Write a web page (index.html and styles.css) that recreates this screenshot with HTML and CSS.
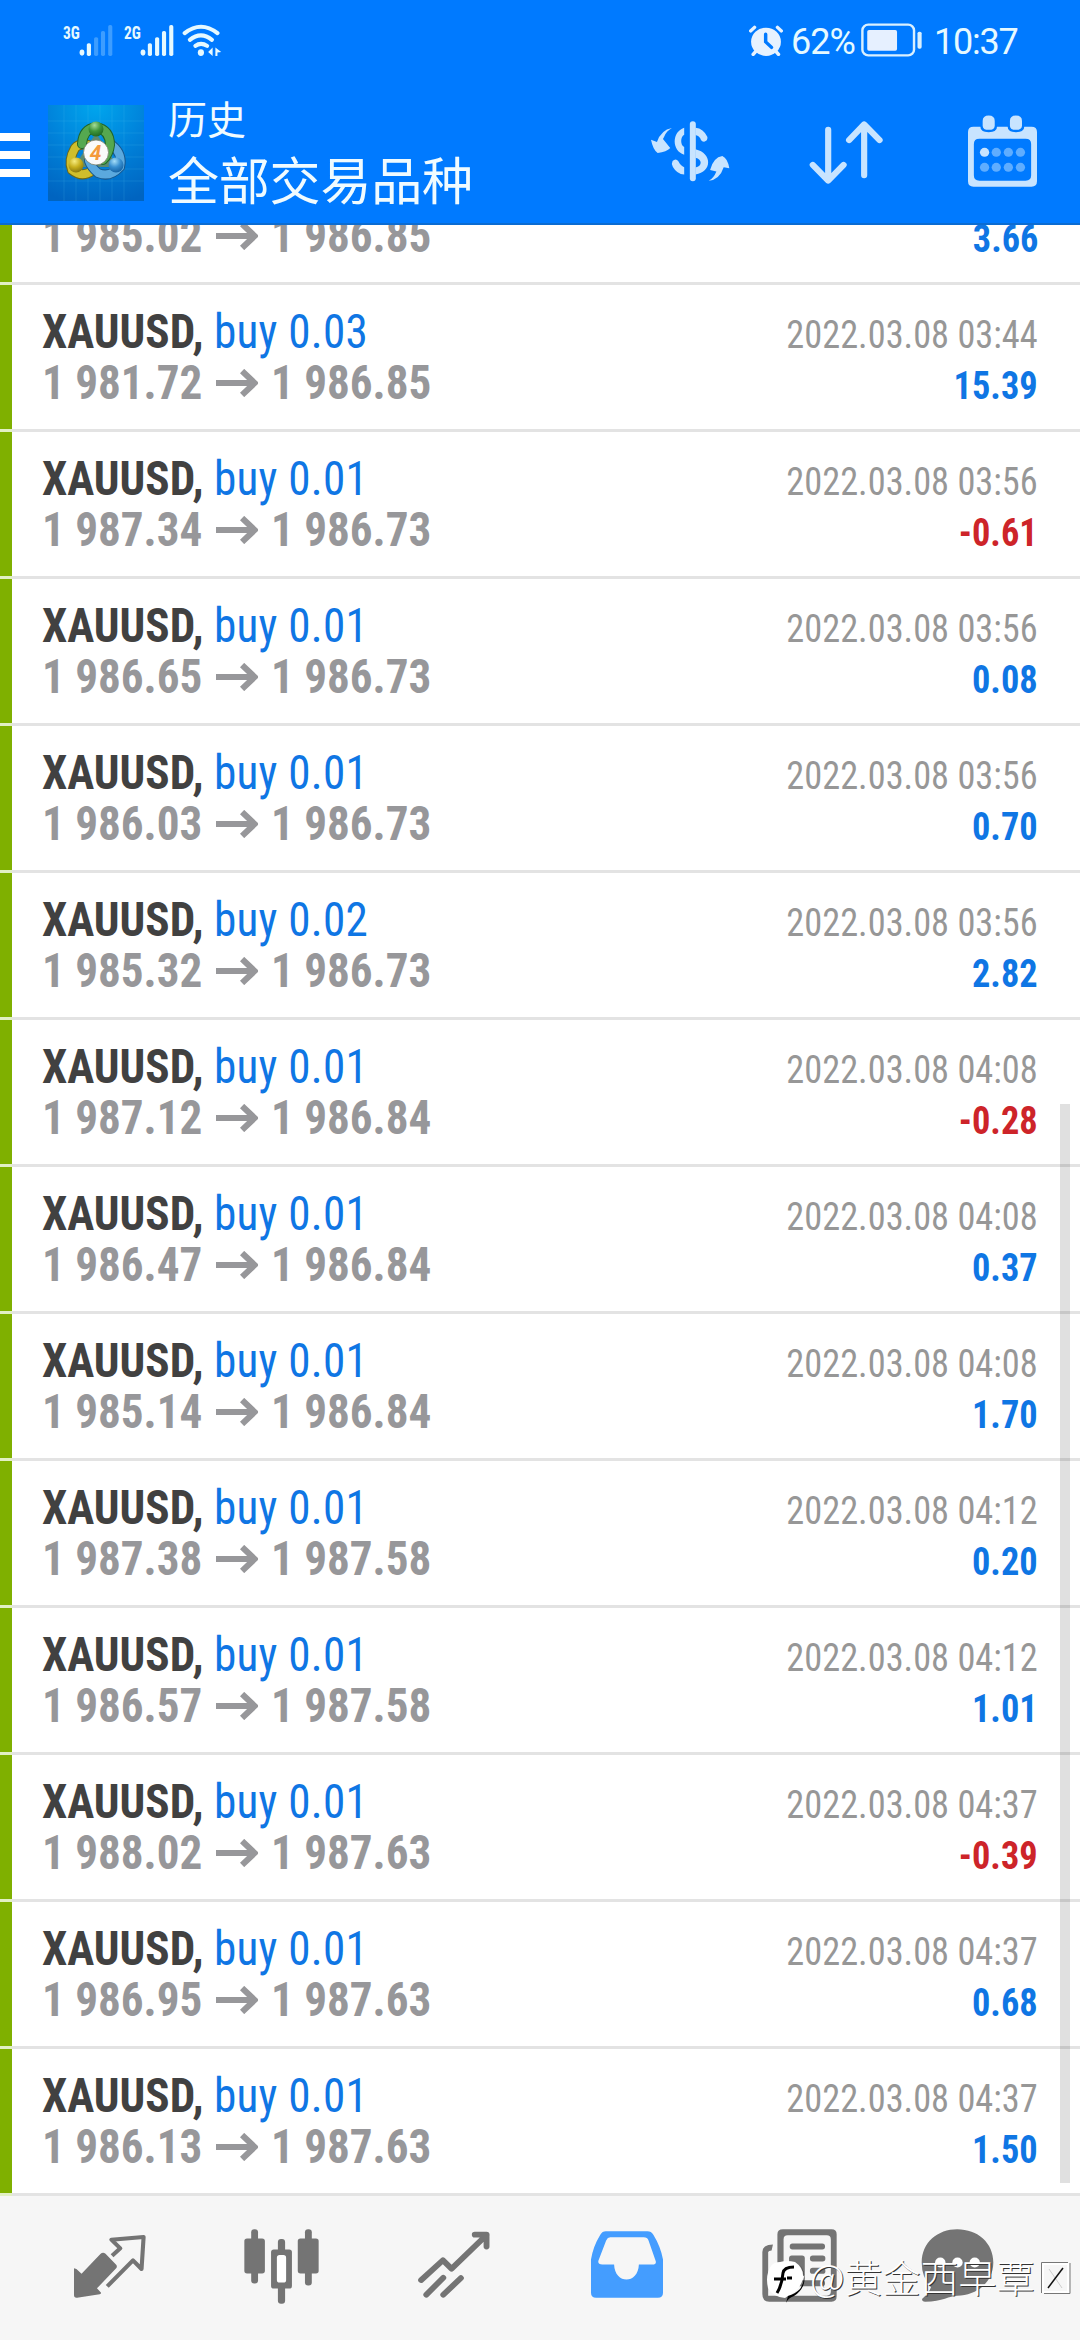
FILE: index.html
```html
<!DOCTYPE html>
<html lang="zh-CN">
<head>
<meta charset="utf-8">
<title>历史</title>
<link rel="stylesheet" href="styles.css">
</head>
<body>
<svg class="defs" width="0" height="0">
  <symbol id="arrow" viewBox="0 0 42 28" preserveAspectRatio="none"><path d="M0 14H38M26 2L38.500 14L26 26" fill="none" stroke="#97979a" stroke-width="6"/></symbol>
</svg>
<div class="screen">
<header class="header">
  <div class="status">
    <svg class="signals" viewBox="180 65 470 110" preserveAspectRatio="none" fill="#e6f9ff">
      <text x="183" y="115" font-size="56" font-weight="700" textLength="49" lengthAdjust="spacingAndGlyphs">3G</text>
      <ellipse cx="238" cy="156" rx="7" ry="9"/>
      <rect x="252" y="128" width="12" height="38" rx="5"/>
      <g fill="#3d9dff"><rect x="273" y="110" width="12" height="56" rx="5"/><rect x="293" y="92" width="12" height="74" rx="5"/><rect x="314" y="74" width="12" height="92" rx="5"/></g>
      <text x="360" y="115" font-size="56" font-weight="700" textLength="49" lengthAdjust="spacingAndGlyphs">2G</text>
      <ellipse cx="415" cy="156" rx="7" ry="9"/>
      <rect x="429" y="128" width="12" height="38" rx="5"/><rect x="450" y="110" width="12" height="56" rx="5"/><rect x="470" y="92" width="12" height="74" rx="5"/><rect x="491" y="74" width="12" height="92" rx="5"/>
      <g fill="none" stroke="#e6f9ff" stroke-width="12" stroke-linecap="round"><path d="M536 98Q583 60 631 98"/><path d="M551 118Q583 92 615 118"/><path d="M567 136Q583 124 601 136"/></g>
      <ellipse cx="583" cy="156" rx="9" ry="10"/>
      <path d="M604 154L617 141V166ZM625 141L642 154L631 156V166H625Z"/>
    </svg>
    <div class="status-right">
      <svg class="alarm" viewBox="608 70 98 100" preserveAspectRatio="none">
        <g fill="none" stroke="#e6f2ff" stroke-width="10" stroke-linecap="round"><path d="M613 91L624 80M701 91L690 80M620 162L630 150M693 162L683 150"/></g>
        <ellipse cx="657" cy="124" rx="43" ry="43" fill="#e6f2ff"/>
        <path d="M656 101V124L673 141" fill="none" stroke="#007aff" stroke-width="10" stroke-linecap="round"/>
      </svg>
      <span class="percent">62%</span>
      <svg class="battery" viewBox="932 70 176 102" preserveAspectRatio="none">
        <rect x="936" y="75" width="149" height="92" rx="17" fill="none" stroke="#d9f0ff" stroke-width="7"/>
        <rect x="950" y="91" width="86" height="62" rx="5" fill="#e6f0ff"/>
        <rect x="1095" y="96" width="12" height="51" rx="5" fill="#d9f0ff"/>
      </svg>
      <span class="clock">10:37</span>
    </div>
  </div>
  <div class="toolbar">
    <div class="menu"><span></span><span></span><span></span></div>
    <svg class="logo" viewBox="0 0 96 96">
      <defs>
        <radialGradient id="sky" cx=".5" cy="0" r="1.050"><stop offset="0" stop-color="#00a6ee"/><stop offset=".5" stop-color="#0082da"/><stop offset="1" stop-color="#0064c0"/></radialGradient>
        <radialGradient id="green" cx=".4" cy=".25" r=".8"><stop offset="0" stop-color="#a5dc98"/><stop offset=".5" stop-color="#3f963c"/><stop offset="1" stop-color="#1c6420"/></radialGradient>
        <radialGradient id="gold" cx=".4" cy=".25" r=".8"><stop offset="0" stop-color="#f6ec80"/><stop offset=".5" stop-color="#c8b01e"/><stop offset="1" stop-color="#81710c"/></radialGradient>
        <radialGradient id="blue" cx=".4" cy=".25" r=".8"><stop offset="0" stop-color="#a5def8"/><stop offset=".5" stop-color="#388fd0"/><stop offset="1" stop-color="#125d9e"/></radialGradient>
      </defs>
      <rect width="96" height="96" fill="url(#sky)"/>
      <path d="M16 0V96M28 0V96M40 0V96M52 0V96M64 0V96M76 0V96M0 16H96M0 28H96M0 40H96M0 52H96M0 64H96M0 76H96" stroke="#5cc5f2" stroke-opacity=".16"/>
      <path d="M48 28L70 62H26Z" fill="#5c8a70"/>
      <g fill="none" stroke-linecap="round">
        <path d="M44 66Q34 73 24 65Q20 55 27 43Q31 38 40 40" stroke="#6b6719" stroke-width="10"/>
        <path d="M44 66Q34 73 24 65Q20 55 27 43Q31 38 40 40" stroke="#cfbe2c" stroke-width="8"/>
        <path d="M64 40Q75 49 72 62Q62 73 50 68Q43 62 41 56" stroke="#17568c" stroke-width="10"/>
        <path d="M64 40Q75 49 72 62Q62 73 50 68Q43 62 41 56" stroke="#5ba9de" stroke-width="8"/>
        <path d="M34 39Q35 24 48 22Q62 25 62 40Q61 49 55 55" stroke="#1f642b" stroke-width="10"/>
        <path d="M34 39Q35 24 48 22Q62 25 62 40Q61 49 55 55" stroke="#55a850" stroke-width="8"/>
      </g>
      <circle cx="48" cy="24" r="7.500" fill="url(#green)"/><circle cx="28" cy="60" r="7.500" fill="url(#gold)"/><circle cx="68" cy="60" r="7.500" fill="url(#blue)"/>
      <circle cx="48" cy="47.500" r="12.500" fill="#fafafa" stroke="#79806c" stroke-width=".8"/>
      <text x="47.500" y="55" text-anchor="middle" font-size="21" font-weight="700" font-style="italic" fill="#f49a3c">4</text>
    </svg>
    <div class="titles"><div class="small">历史</div><div class="large">全部交易品种</div></div>
    <svg class="symbols" viewBox="32 45 238 186" fill="#c8e4ff">
      <path d="M95 69Q79 78 72 94L68 102L90 129Q79 141 52 144Q38 134 32 104L50 111Q62 75 95 69Z"/>
      <path d="M206 228Q221 220 229 200L210 195Q220 157 247 153Q263 160 268 190L251 187Q239 224 206 228Z"/>
      <path d="M132 68V89C120 94 120 121 132 126V149C94 138 94 80 132 68ZM132 209V187Q121 183 115 170Q107 158 97 168Q92 177 98 186Q110 207 132 209Z"/>
      <rect x="149" y="48" width="18" height="181" rx="9"/>
      <path d="M166 68Q190 70 202 96Q203 108 192 110Q183 110 180 99Q175 91 166 90ZM166 133C217 145 217 201 166 209V188C187 183 187 163 166 158Z"/>
    </svg>
    <svg class="sort" viewBox="780 360 216 194" preserveAspectRatio="none" fill="none" stroke="#c8e4ff" stroke-width="18" stroke-linecap="round" stroke-linejoin="round"><path d="M836 389V540M791 494L836 541L881 494M941 525V375M897 420L941 373L986 420"/></svg>
    <svg class="calendar" viewBox="1243 346 200 216" preserveAspectRatio="none" fill="#c8e4ff">
      <path fill-rule="evenodd" d="M1259 381H1427Q1443 381 1443 397V545Q1443 561 1427 561H1259Q1243 561 1243 545V397Q1243 381 1259 381ZM1276 417Q1260 417 1260 433V527Q1260 543 1276 543H1410Q1426 543 1426 527V433Q1426 417 1410 417Z"/>
      <g stroke="#007aff" stroke-width="7"><path d="M1282 364Q1282 344 1303 344Q1324 344 1324 364V378Q1324 394 1303 394Q1282 394 1282 378ZM1361 364Q1361 344 1382 344Q1403 344 1403 364V378Q1403 394 1382 394Q1361 394 1361 378Z"/></g>
      <circle cx="1291" cy="458" r="13.500"/>
      <g fill="#5fadff"><circle cx="1325" cy="458" r="13.500"/><circle cx="1360" cy="458" r="13.500"/><circle cx="1395" cy="458" r="13.500"/><circle cx="1291" cy="503" r="13.500"/><circle cx="1325" cy="503" r="13.500"/><circle cx="1360" cy="503" r="13.500"/><circle cx="1395" cy="503" r="13.500"/></g>
    </svg>
  </div>
</header>

<main class="deals">
  <div class="deal clipped"><div class="info"><div class="prices">1 985.02<svg><use href="#arrow"/></svg>1 986.85</div></div><div class="result"><div class="profit">3.66</div></div></div>
  <div class="deal"><div class="info"><div class="name"><b>XAUUSD,</b> <span>buy 0.03</span></div><div class="prices">1 981.72<svg><use href="#arrow"/></svg>1 986.85</div></div><div class="result"><div class="time">2022.03.08 03:44</div><div class="profit">15.39</div></div></div>
  <div class="deal"><div class="info"><div class="name"><b>XAUUSD,</b> <span>buy 0.01</span></div><div class="prices">1 987.34<svg><use href="#arrow"/></svg>1 986.73</div></div><div class="result"><div class="time">2022.03.08 03:56</div><div class="profit loss">-0.61</div></div></div>
  <div class="deal"><div class="info"><div class="name"><b>XAUUSD,</b> <span>buy 0.01</span></div><div class="prices">1 986.65<svg><use href="#arrow"/></svg>1 986.73</div></div><div class="result"><div class="time">2022.03.08 03:56</div><div class="profit">0.08</div></div></div>
  <div class="deal"><div class="info"><div class="name"><b>XAUUSD,</b> <span>buy 0.01</span></div><div class="prices">1 986.03<svg><use href="#arrow"/></svg>1 986.73</div></div><div class="result"><div class="time">2022.03.08 03:56</div><div class="profit">0.70</div></div></div>
  <div class="deal"><div class="info"><div class="name"><b>XAUUSD,</b> <span>buy 0.02</span></div><div class="prices">1 985.32<svg><use href="#arrow"/></svg>1 986.73</div></div><div class="result"><div class="time">2022.03.08 03:56</div><div class="profit">2.82</div></div></div>
  <div class="deal"><div class="info"><div class="name"><b>XAUUSD,</b> <span>buy 0.01</span></div><div class="prices">1 987.12<svg><use href="#arrow"/></svg>1 986.84</div></div><div class="result"><div class="time">2022.03.08 04:08</div><div class="profit loss">-0.28</div></div></div>
  <div class="deal"><div class="info"><div class="name"><b>XAUUSD,</b> <span>buy 0.01</span></div><div class="prices">1 986.47<svg><use href="#arrow"/></svg>1 986.84</div></div><div class="result"><div class="time">2022.03.08 04:08</div><div class="profit">0.37</div></div></div>
  <div class="deal"><div class="info"><div class="name"><b>XAUUSD,</b> <span>buy 0.01</span></div><div class="prices">1 985.14<svg><use href="#arrow"/></svg>1 986.84</div></div><div class="result"><div class="time">2022.03.08 04:08</div><div class="profit">1.70</div></div></div>
  <div class="deal"><div class="info"><div class="name"><b>XAUUSD,</b> <span>buy 0.01</span></div><div class="prices">1 987.38<svg><use href="#arrow"/></svg>1 987.58</div></div><div class="result"><div class="time">2022.03.08 04:12</div><div class="profit">0.20</div></div></div>
  <div class="deal"><div class="info"><div class="name"><b>XAUUSD,</b> <span>buy 0.01</span></div><div class="prices">1 986.57<svg><use href="#arrow"/></svg>1 987.58</div></div><div class="result"><div class="time">2022.03.08 04:12</div><div class="profit">1.01</div></div></div>
  <div class="deal"><div class="info"><div class="name"><b>XAUUSD,</b> <span>buy 0.01</span></div><div class="prices">1 988.02<svg><use href="#arrow"/></svg>1 987.63</div></div><div class="result"><div class="time">2022.03.08 04:37</div><div class="profit loss">-0.39</div></div></div>
  <div class="deal"><div class="info"><div class="name"><b>XAUUSD,</b> <span>buy 0.01</span></div><div class="prices">1 986.95<svg><use href="#arrow"/></svg>1 987.63</div></div><div class="result"><div class="time">2022.03.08 04:37</div><div class="profit">0.68</div></div></div>
  <div class="deal"><div class="info"><div class="name"><b>XAUUSD,</b> <span>buy 0.01</span></div><div class="prices">1 986.13<svg><use href="#arrow"/></svg>1 987.63</div></div><div class="result"><div class="time">2022.03.08 04:37</div><div class="profit">1.50</div></div></div>
  <div class="scrollbar"></div>
</main>

<nav class="tabs">
  <svg class="quotes" viewBox="215 193 210 192" preserveAspectRatio="none">
    <path fill="#747474" d="M215 296L222 298L237 312L292 253Q299 246 307 252L338 285Q342 290 338 296L282 356L294 369Q294 373 290 374L224 384Q215 385 215 376Z"/>
    <path fill="none" stroke="#747474" stroke-width="12" stroke-linejoin="round" d="M326 258L350 236L324 210L418 202L412 298L387 272L312 350"/>
  </svg>
  <svg class="charts" viewBox="708 176 219 224" preserveAspectRatio="none" fill="#747474">
    <rect x="729" y="177" width="20" height="162" rx="9"/><rect x="709" y="204" width="60" height="105" rx="8"/>
    <rect x="886" y="177" width="20" height="168" rx="9"/><rect x="865" y="204" width="61" height="105" rx="8"/>
    <rect x="807" y="206" width="21" height="193" rx="9"/><rect x="787" y="237" width="61" height="117" rx="8"/><rect x="804" y="254" width="27" height="82" rx="8" fill="#fff"/>
  </svg>
  <svg class="trade" viewBox="1213 184 208 202" preserveAspectRatio="none" fill="none" stroke="#747474" stroke-width="17" stroke-linecap="round" stroke-linejoin="round">
    <path d="M1222 332L1285 272L1310 298L1411 196M1377 195H1411V231M1237 376L1286 325M1286 376L1337 326"/>
  </svg>
  <svg class="history" viewBox="147 185 209 200" preserveAspectRatio="none">
    <path fill="#449dff" fill-rule="evenodd" d="M190 186H311Q322 186 328 196Q349 231 356 270V369Q356 384 341 384H162Q147 384 147 369V270Q153 231 174 196Q180 186 190 186ZM203 204Q195 204 191 213L169 272Q165 285 180 285H214C216 345 284 345 286 285H325Q339 285 334 272L314 213Q311 204 300 204Z"/>
  </svg>
  <svg class="news" viewBox="645 176 219 218" preserveAspectRatio="none">
    <path fill="#747474" d="M677 222Q646 222 646 245V370Q646 393 666 393H848Q863 393 863 377V192Q863 177 848 177H706Q690 177 690 192V375H663V245Q664 240 673 240Z"/>
    <rect x="708" y="195" width="138" height="180" rx="12" fill="#f6f6f6"/>
    <g fill="#747474"><rect x="726" y="219" width="103" height="18" rx="8"/><rect x="724" y="255" width="46" height="62" rx="8"/><rect x="785" y="255" width="45" height="18" rx="8"/><rect x="785" y="292" width="45" height="18" rx="8"/><rect x="726" y="329" width="103" height="18" rx="8"/></g>
  </svg>
  <svg class="chat" viewBox="1107 176 212 218" preserveAspectRatio="none">
    <path fill="#747474" d="M1109 276C1109 216 1156 177 1212 177C1272 177 1317 218 1317 276C1317 336 1268 375 1212 375C1190 375 1170 392 1119 393Q1110 393 1110 385Q1130 367 1136 350Q1109 320 1109 276Z"/>
    <g fill="#fff"><circle cx="1163" cy="276" r="15"/><circle cx="1213" cy="276" r="15"/><circle cx="1263" cy="276" r="15"/></g>
  </svg>
</nav>

<div class="watermark">
  <svg class="badge" viewBox="0 0 40 44"><path fill="#fff" d="M14 2Q21 0 29 2Q38 8 37 18Q35 29 25 34L19 38Q7 37 2 28Q-1 15 5 6Q8 2 14 2Z"/><path d="M11 33Q16 25 17 13Q18 7 28 7M8 19H20M21 18H26" fill="none" stroke="#000" stroke-width="3"/><path d="M34 5Q42 17 34 29Q29 34 22 36L20 43Q22 38 28 36Q36 31 38 23Q40 13 34 5Z"/></svg>
  <span>@黄金西早覃</span>
  <svg class="missing" viewBox="0 0 32 34"><path d="M3 3H28V31H3Z" fill="none" stroke="#fff" stroke-width="2"/><path d="M1.500 32V1.500H28M4 32.500H30V2" fill="none" stroke="#777"/><path d="M9 8L22 27" stroke="#ccc"/><path d="M23 7L8 27" stroke="#111" stroke-width="1.500"/></svg>
</div>
</div>
</body>
</html>
```
FILE: styles.css
```css
* { box-sizing: border-box; }
body { margin: 0; background: #fff; font-family: "Roboto Condensed", Roboto, "Noto Sans CJK SC", sans-serif; }
svg { display: block; flex: none; }
.defs { position: absolute; }
.screen { position: relative; display: flex; flex-direction: column; width: 1080px; height: 2340px; overflow: hidden; }

.header { flex: none; height: 225px; background: #007aff; border-bottom: 2px solid #0b6cd2; }
.status { display: flex; justify-content: space-between; height: 82px; padding: 22px 63px 0 62px; }
.signals { width: 162px; height: 37px; }
.status-right { display: flex; align-items: flex-start; height: 40px; color: #e6f9ff; font-family: Roboto, sans-serif; font-size: 36px; line-height: 40px; }
.alarm { width: 34px; height: 33px; margin-top: 2px; }
.percent { width: 65px; margin-left: 8px; letter-spacing: -1px; }
.battery { width: 61px; height: 34px; margin: 1px 12px 0 5px; }
.clock { width: 83px; letter-spacing: -1.200px; }

.toolbar { display: flex; align-items: flex-start; height: 141px; }
.menu { display: flex; flex-direction: column; gap: 10px; width: 30px; padding-top: 51px; }
.menu span { height: 8px; background: #fff; }
.logo { width: 96px; height: 96px; margin: 23px 0 0 18px; font-family: Roboto, sans-serif; }
.titles { width: 470px; margin: 7px 0 0 24px; color: #f0fbff; font-family: "Noto Sans CJK SC", sans-serif; }
.small { font-size: 39px; line-height: 56px; }
.large { font-size: 51px; line-height: 66px; letter-spacing: -.2px; }
.symbols { width: 79px; height: 62px; margin: 38px 0 0 13px; }
.sort { width: 74px; height: 65px; margin: 38px 0 0 79px; }
.calendar { width: 69px; height: 72px; margin: 33px 0 0 85px; }

.deals { position: relative; flex: none; height: 1971px; overflow: hidden; }
.deal {
  display: flex; justify-content: space-between; height: 147px; padding: 21px 42px 0;
  background:
    linear-gradient(#7fb000, #7fb000) 0 0 / 12px 144px no-repeat,
    linear-gradient(90deg, #e2f0c4 12px, #e3e3e3 12px) 0 144px / 100% 3px no-repeat;
}
.clipped { margin-top: -87px; padding-top: 72px; }
.info { transform: scaleX(.94); transform-origin: left top; }
.name, .prices { font-size: 48px; line-height: 51px; white-space: nowrap; }
.name b { color: #414141; }
.name span { color: #0f76e4; letter-spacing: .3px; }
.prices { display: flex; align-items: center; color: #97979a; font-weight: 700; }
.prices svg { width: 45px; height: 28px; margin: 0 14px; }
.result { padding-top: 4px; text-align: right; font-size: 39px; line-height: 51px; transform: scaleX(.932); transform-origin: right top; }
.time { color: #979797; }
.profit { color: #0f76e4; font-weight: 700; }
.loss { color: #cd2429; }
.scrollbar { position: absolute; top: 879px; right: 10px; width: 10px; height: 1079px; background: rgba(0, 0, 0, .12); }

.tabs { display: flex; flex: none; align-items: flex-start; height: 144px; padding-left: 74px; background: #f6f6f6; }
.quotes { width: 72px; height: 64px; margin-top: 38px; }
.charts { width: 75px; height: 75px; margin: 33px 0 0 98px; }
.trade { width: 72px; height: 67px; margin: 35px 0 0 99px; }
.history { width: 72px; height: 67px; margin: 35px 0 0 101px; }
.news { width: 75px; height: 73px; margin: 33px 0 0 99px; }
.chat { width: 73px; height: 73px; margin: 33px 0 0 84px; }

.watermark { position: absolute; left: 766px; top: 2256px; display: flex; align-items: center; height: 46px; }
.badge { width: 40px; height: 44px; margin-top: 6px; }
.watermark span { margin: -6px 0 0 4px; color: #fff; font: 300 38px/46px "Noto Sans CJK SC", sans-serif; text-shadow: 1px 1px 0 #333; white-space: nowrap; }
.missing { width: 32px; height: 34px; margin: -3px 0 0 5px; }
```
